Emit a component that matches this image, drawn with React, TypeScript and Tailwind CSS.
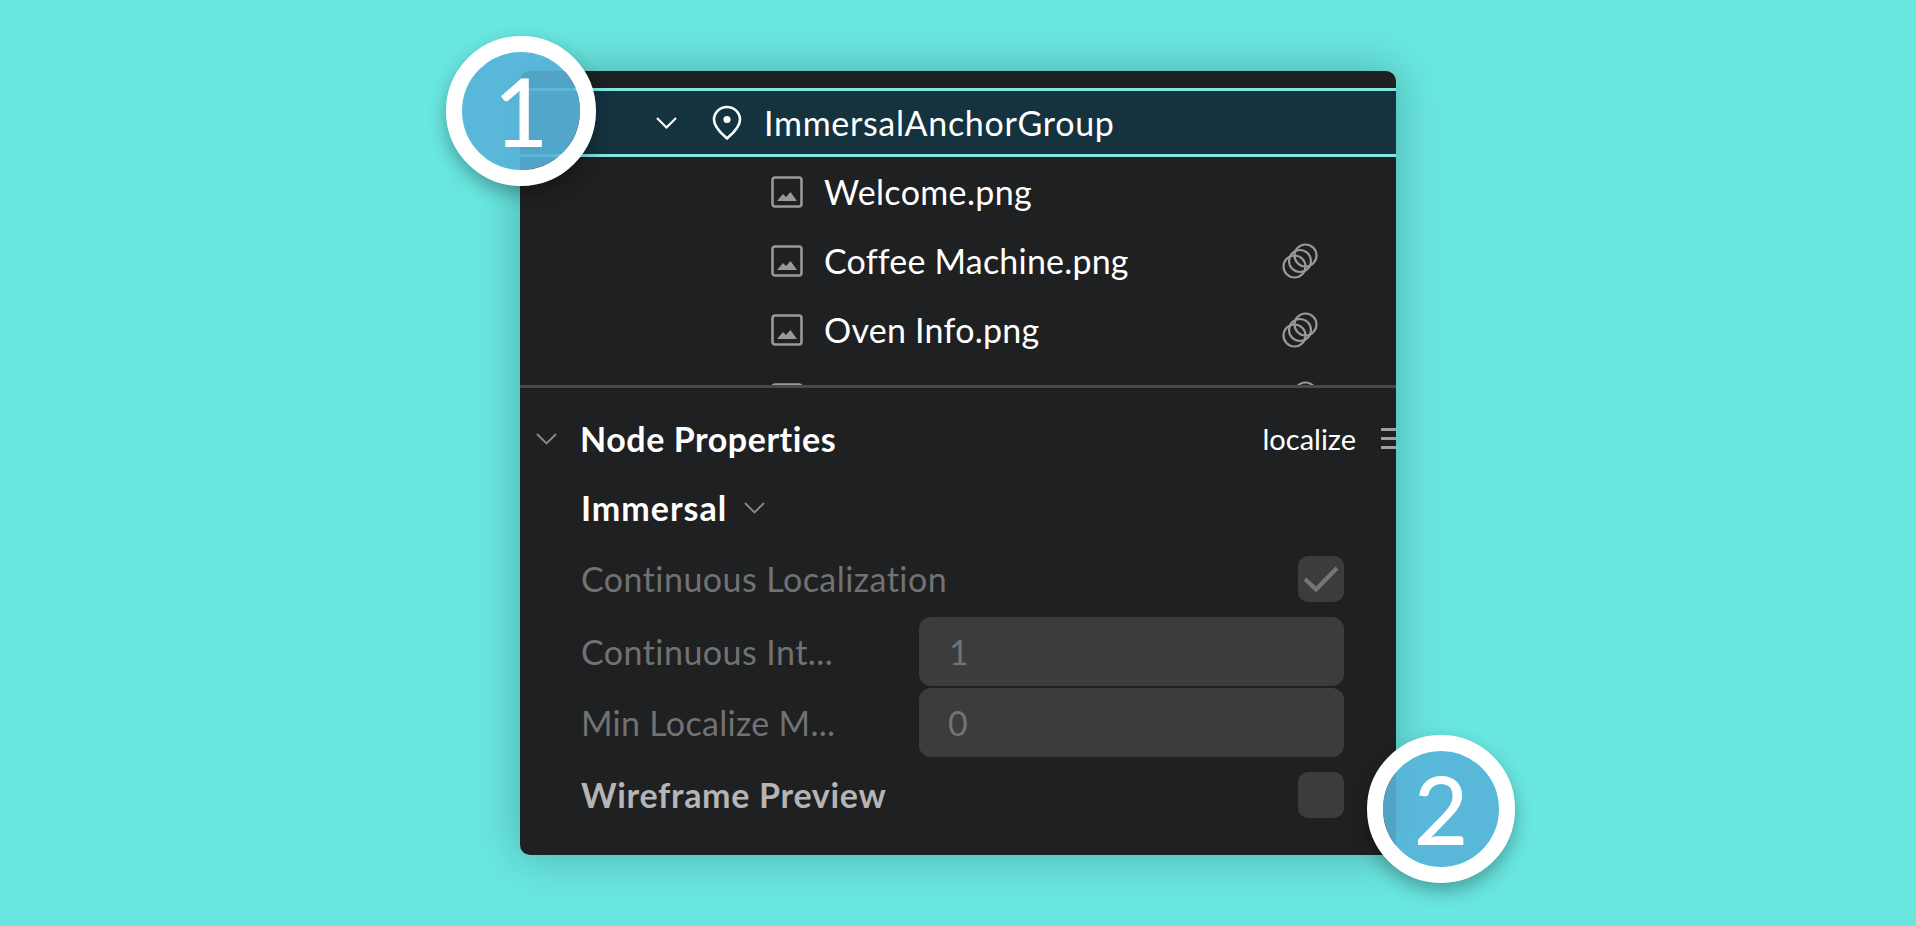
function ImageIcon() {
  return (
    <svg width="32" height="32" viewBox="0 0 32 32" fill="none" className="shrink-0">
      <rect x="1.5" y="1.5" width="29" height="29" rx="2.5" stroke="#999999" strokeWidth="2.6" />
      <path d="M6 25 L12 18 L15 21 L19.5 16 L26 25 Z" fill="#999999" />
    </svg>
  );
}

function RingsIcon() {
  return (
    <svg width="36" height="36" viewBox="0 0 36 36" fill="none" stroke="#999999" strokeWidth="2.2">
      <circle cx="12.5" cy="23.5" r="11" />
      <circle cx="18" cy="18" r="11" />
      <circle cx="23.5" cy="12.5" r="11" />
    </svg>
  );
}

function PinIcon() {
  return (
    <svg width="32" height="36" viewBox="0 0 32 36" fill="none" className="shrink-0">
      <path
        d="M16 33.5 C12 30 3 23 3 14.5 C3 7.5 9 2 16 2 C23 2 29 7.5 29 14.5 C29 23 20 30 16 33.5 Z"
        stroke="white"
        strokeWidth="2.6"
        strokeLinejoin="round"
      />
      <circle cx="16" cy="14.5" r="3.6" fill="white" />
    </svg>
  );
}

function Chevron({ color, strokeWidth }: { color: string; strokeWidth: number }) {
  return (
    <svg width="21" height="12" viewBox="0 0 21 12" fill="none" className="shrink-0">
      <path d="M1 1 L10.5 10.5 L20 1" stroke={color} strokeWidth={strokeWidth} />
    </svg>
  );
}

function FileRow({ name, linked, tracking }: { name: string; linked?: boolean; tracking?: string }) {
  return (
    <div className="flex h-[69px] items-center pl-[251px] pr-[78px]">
      <ImageIcon />
      <span className={`ml-[21px] text-white ${tracking}`}>{name}</span>
      {linked && (
        <span className="ml-auto">
          <RingsIcon />
        </span>
      )}
    </div>
  );
}

function Badge({ n, className }: { n: number; className: string }) {
  return (
    <div
      className={`absolute flex items-center justify-center rounded-full border-[16px] border-white bg-[#58b3d9]/90 bg-clip-padding text-[94px] leading-none font-medium text-white shadow-[0_8px_18px_rgba(0,0,0,0.3)] ${className}`}
    >
      {n}
    </div>
  );
}

export default function App() {
  return (
    <div className="flex min-h-screen items-center justify-center bg-[#69e6e0] font-['Lato',sans-serif] text-[34px]">
      <div className="relative w-[876px]">
        <div className="flex flex-col overflow-hidden rounded-[10px] bg-[#1f2022] shadow-[0_0_44px_rgba(0,0,0,0.25)]">
          {/* Node tree, clipped top and bottom like a scrolled list */}
          <div className="h-[314px] overflow-hidden pt-[17px]">
            <div className="flex h-[69px] items-center border-y-[3px] border-[#7fe6e3] bg-[#14333f] pl-[136px] text-white">
              <Chevron color="white" strokeWidth={2.2} />
              <span className="ml-[34px]">
                <PinIcon />
              </span>
              <span className="ml-[21px] tracking-[0.7px]">ImmersalAnchorGroup</span>
            </div>
            <FileRow name="Welcome.png" tracking="tracking-[0.36px]" />
            <FileRow name="Coffee Machine.png" linked tracking="tracking-[0.2px]" />
            <FileRow name="Oven Info.png" linked tracking="tracking-[0.25px]" />
            <FileRow name="" linked />
          </div>
          <div className="h-[3px] bg-[#47484a]" />

          {/* Properties */}
          <div className="flex flex-col pt-[16px] pb-[26px]">
            <div className="flex h-[69px] items-center pl-[16px] font-bold text-white">
              <Chevron color="#8a8a8a" strokeWidth={1.8} />
              <span className="ml-[23px] tracking-[0.55px]">Node Properties</span>
              <span className="ml-auto text-[29px] font-normal">localize</span>
              <div className="ml-[25px] flex w-[15px] flex-col gap-[6px]">
                <div className="h-[3px] bg-[#a0a0a0]" />
                <div className="h-[3px] bg-[#a0a0a0]" />
                <div className="h-[3px] bg-[#a0a0a0]" />
              </div>
            </div>
            <div className="flex h-[69px] items-center pl-[61px] font-bold text-white">
              <span className="tracking-[1px]">Immersal</span>
              <span className="ml-[17px]">
                <Chevron color="#8a8a8a" strokeWidth={1.8} />
              </span>
            </div>
            <div className="mt-[2px] flex h-[69px] items-center justify-between pl-[61px] pr-[52px] text-[#727272]">
              <span className="tracking-[0.45px]">Continuous Localization</span>
              <div className="flex h-[46px] w-[46px] items-center justify-center rounded-[10px] bg-[#3c3c3c]">
                <svg width="36" height="26" viewBox="0 0 36 26" fill="none">
                  <path d="M2 13 L13 23.5 L34 2" stroke="#757575" strokeWidth="4.2" />
                </svg>
              </div>
            </div>
            <div className="mt-[4px] flex flex-col gap-[2px] pl-[61px] pr-[52px] text-[#727272]">
              <div className="flex h-[69px] items-center">
                <span className="w-[338px] tracking-[0.45px]">Continuous Int...</span>
                <div className="flex h-[69px] flex-1 items-center rounded-[12px] bg-[#3c3c3c] pl-[30px]">1</div>
              </div>
              <div className="flex h-[69px] items-center">
                <span className="w-[338px] tracking-[0.3px]">Min Localize M...</span>
                <div className="flex h-[69px] flex-1 items-center rounded-[12px] bg-[#3c3c3c] pl-[29px]">0</div>
              </div>
            </div>
            <div className="mt-[4px] flex h-[68px] items-center justify-between pl-[61px] pr-[52px]">
              <span className="pb-[2px] font-bold tracking-[0.7px] text-[#b5b5b5]">Wireframe Preview</span>
              <div className="h-[46px] w-[46px] rounded-[10px] bg-[#3c3c3c]" />
            </div>
          </div>
        </div>
        <Badge n={1} className="-left-[74px] -top-[35px] h-[150px] w-[150px]" />
        <Badge n={2} className="-right-[119px] -bottom-[28px] h-[148px] w-[148px]" />
      </div>
    </div>
  );
}
